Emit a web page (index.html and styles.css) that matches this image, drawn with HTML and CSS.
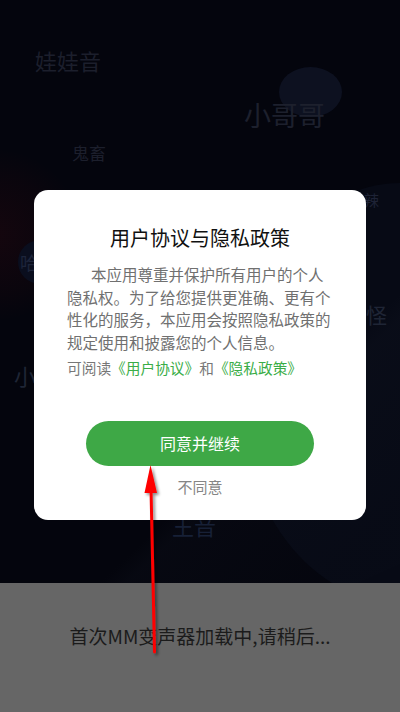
FILE: index.html
```html
<!DOCTYPE html>
<html lang="zh">
<head>
<meta charset="utf-8">
<title>MM变声器</title>
<link rel="stylesheet" href="styles.css">
</head>
<body>
<div class="screen">
  <div class="bg">
    <div class="glow-red"></div>
    <div class="glow-blue"></div>
    <div class="sheen"></div>
    <div class="blob blob-a"></div>
    <div class="blob blob-b"></div>
    <span class="tag t-wawa">娃娃音</span>
    <span class="tag t-gege">小哥哥</span>
    <span class="tag t-guichu">鬼畜</span>
    <span class="tag t-ha">哈</span>
    <span class="tag t-xiao">小</span>
    <span class="tag t-la">辣</span>
    <span class="tag t-guai">怪</span>
    <span class="tag t-wang">王音</span>
  </div>

  <div class="overlay">
    <div class="dialog">
      <h1 class="dialog-title">用户协议与隐私政策</h1>
      <p class="dialog-body">本应用尊重并保护所有用户的个人隐私权。为了给您提供更准确、更有个性化的服务，本应用会按照隐私政策的规定使用和披露您的个人信息。</p>
      <p class="dialog-links">可阅读<span class="link">《用户协议》</span>和<span class="link">《隐私政策》</span></p>
      <button class="btn-agree">同意并继续</button>
      <div class="btn-decline">不同意</div>
    </div>
    <div class="toast">首次MM变声器加载中,请稍后...</div>
  </div>

  <svg class="arrow" width="400" height="712" viewBox="0 0 400 712">
    <defs>
      <filter id="sh" x="-50%" y="-10%" width="200%" height="120%">
        <feDropShadow dx="2" dy="2" stdDeviation="1.5" flood-color="#000" flood-opacity="0.45"/>
      </filter>
    </defs>
    <g filter="url(#sh)">
      <line x1="154.5" y1="652" x2="151" y2="488" stroke="#ff0000" stroke-width="3" stroke-linecap="round"/>
      <polygon points="150.5,465 144.5,493 157,493" fill="#ff0000"/>
    </g>
  </svg>
</div>
</body>
</html>
```

FILE: styles.css
```css
html, body {
  margin: 0;
  padding: 0;
  background: #04050d;
}

.screen {
  position: relative;
  width: 400px;
  height: 712px;
  overflow: hidden;
  background: #04050d;
  font-family: "Noto Sans CJK SC", "Noto Sans", sans-serif;
}

/* ---------- background canvas ---------- */
.bg {
  position: absolute;
  inset: 0;
}

.glow-red {
  position: absolute;
  left: -90px;
  top: 150px;
  width: 170px;
  height: 170px;
  border-radius: 50%;
  background: radial-gradient(circle, rgba(40, 7, 15, 0.45) 0%, rgba(28, 6, 13, 0.25) 50%, rgba(4, 5, 13, 0) 72%);
}

.glow-blue {
  position: absolute;
  left: 240px;
  top: 183px;
  width: 320px;
  height: 420px;
  border-radius: 50%;
  background: #070a15;
}

.sheen {
  position: absolute;
  left: -60px;
  top: 330px;
  width: 560px;
  height: 300px;
  background: linear-gradient(160deg, rgba(255, 255, 255, 0) 48%, rgba(22, 26, 40, 0.16) 52%, rgba(20, 24, 38, 0.05) 80%);
  transform: rotate(-24deg);
  transform-origin: center;
}

.blob {
  position: absolute;
  border-radius: 50%;
}

.blob-a {
  left: 279px;
  top: 67px;
  width: 63px;
  height: 50px;
  background: #0d1120;
}

.blob-b {
  left: 18px;
  top: 240px;
  width: 44px;
  height: 44px;
  background: #0a0e1e;
}

.tag {
  position: absolute;
  color: #1c1f2c;
  white-space: nowrap;
  line-height: 1;
}

.t-wawa { left: 35px; top: 49px; font-size: 22px; }
.t-gege { left: 244px; top: 101px; font-size: 27px; color: #1d202d; }
.t-guichu { left: 72px; top: 144px; font-size: 17px; }
.t-ha { left: 20px; top: 253px; font-size: 18px; color: #1d243a; }
.t-xiao { left: 14px; top: 364px; font-size: 22px; color: #1f2535; }
.t-la { left: 364px; top: 192px; font-size: 15px; color: #1e2336; }
.t-guai { left: 366px; top: 304px; font-size: 21px; color: #1f2535; }
.t-wang { left: 172px; top: 514px; font-size: 22px; color: #172036; }

/* ---------- overlay layer ---------- */
.overlay {
  position: absolute;
  inset: 0;
  display: flex;
  flex-direction: column;
}

.dialog {
  margin: 190px 34px 0;
  height: 330px;
  box-sizing: border-box;
  background: #ffffff;
  border-radius: 14px;
  padding: 34px 33px 0;
  display: flex;
  flex-direction: column;
}

.dialog-title {
  margin: 0;
  font-size: 20px;
  font-weight: 400;
  line-height: 28px;
  color: #111111;
  text-align: center;
}

.dialog-body {
  margin: 11px 0 0;
  font-size: 15.5px;
  line-height: 22.5px;
  color: #707070;
  text-indent: 24px;
}

.dialog-links {
  margin: 5px 0 0;
  font-size: 14.7px;
  line-height: 20px;
  color: #777777;
  white-space: nowrap;
}

.link {
  color: #3aad47;
}

.btn-agree {
  align-self: center;
  margin-top: 43px;
  width: 228px;
  height: 45px;
  border: 0;
  border-radius: 23px;
  background: #3ea846;
  color: #ffffff;
  font-family: inherit;
  font-size: 16px;
  line-height: 45px;
  padding: 0;
}

.btn-decline {
  margin-top: 11px;
  text-align: center;
  font-size: 15px;
  line-height: 20px;
  color: #858585;
}

.toast {
  margin-top: auto;
  height: 129px;
  box-sizing: border-box;
  background: #666666;
  padding-top: 40px;
  text-align: center;
  font-size: 19px;
  line-height: 26px;
  color: #1b1b1b;
}

/* ---------- annotation arrow ---------- */
.arrow {
  position: absolute;
  left: 0;
  top: 0;
  pointer-events: none;
}
```
